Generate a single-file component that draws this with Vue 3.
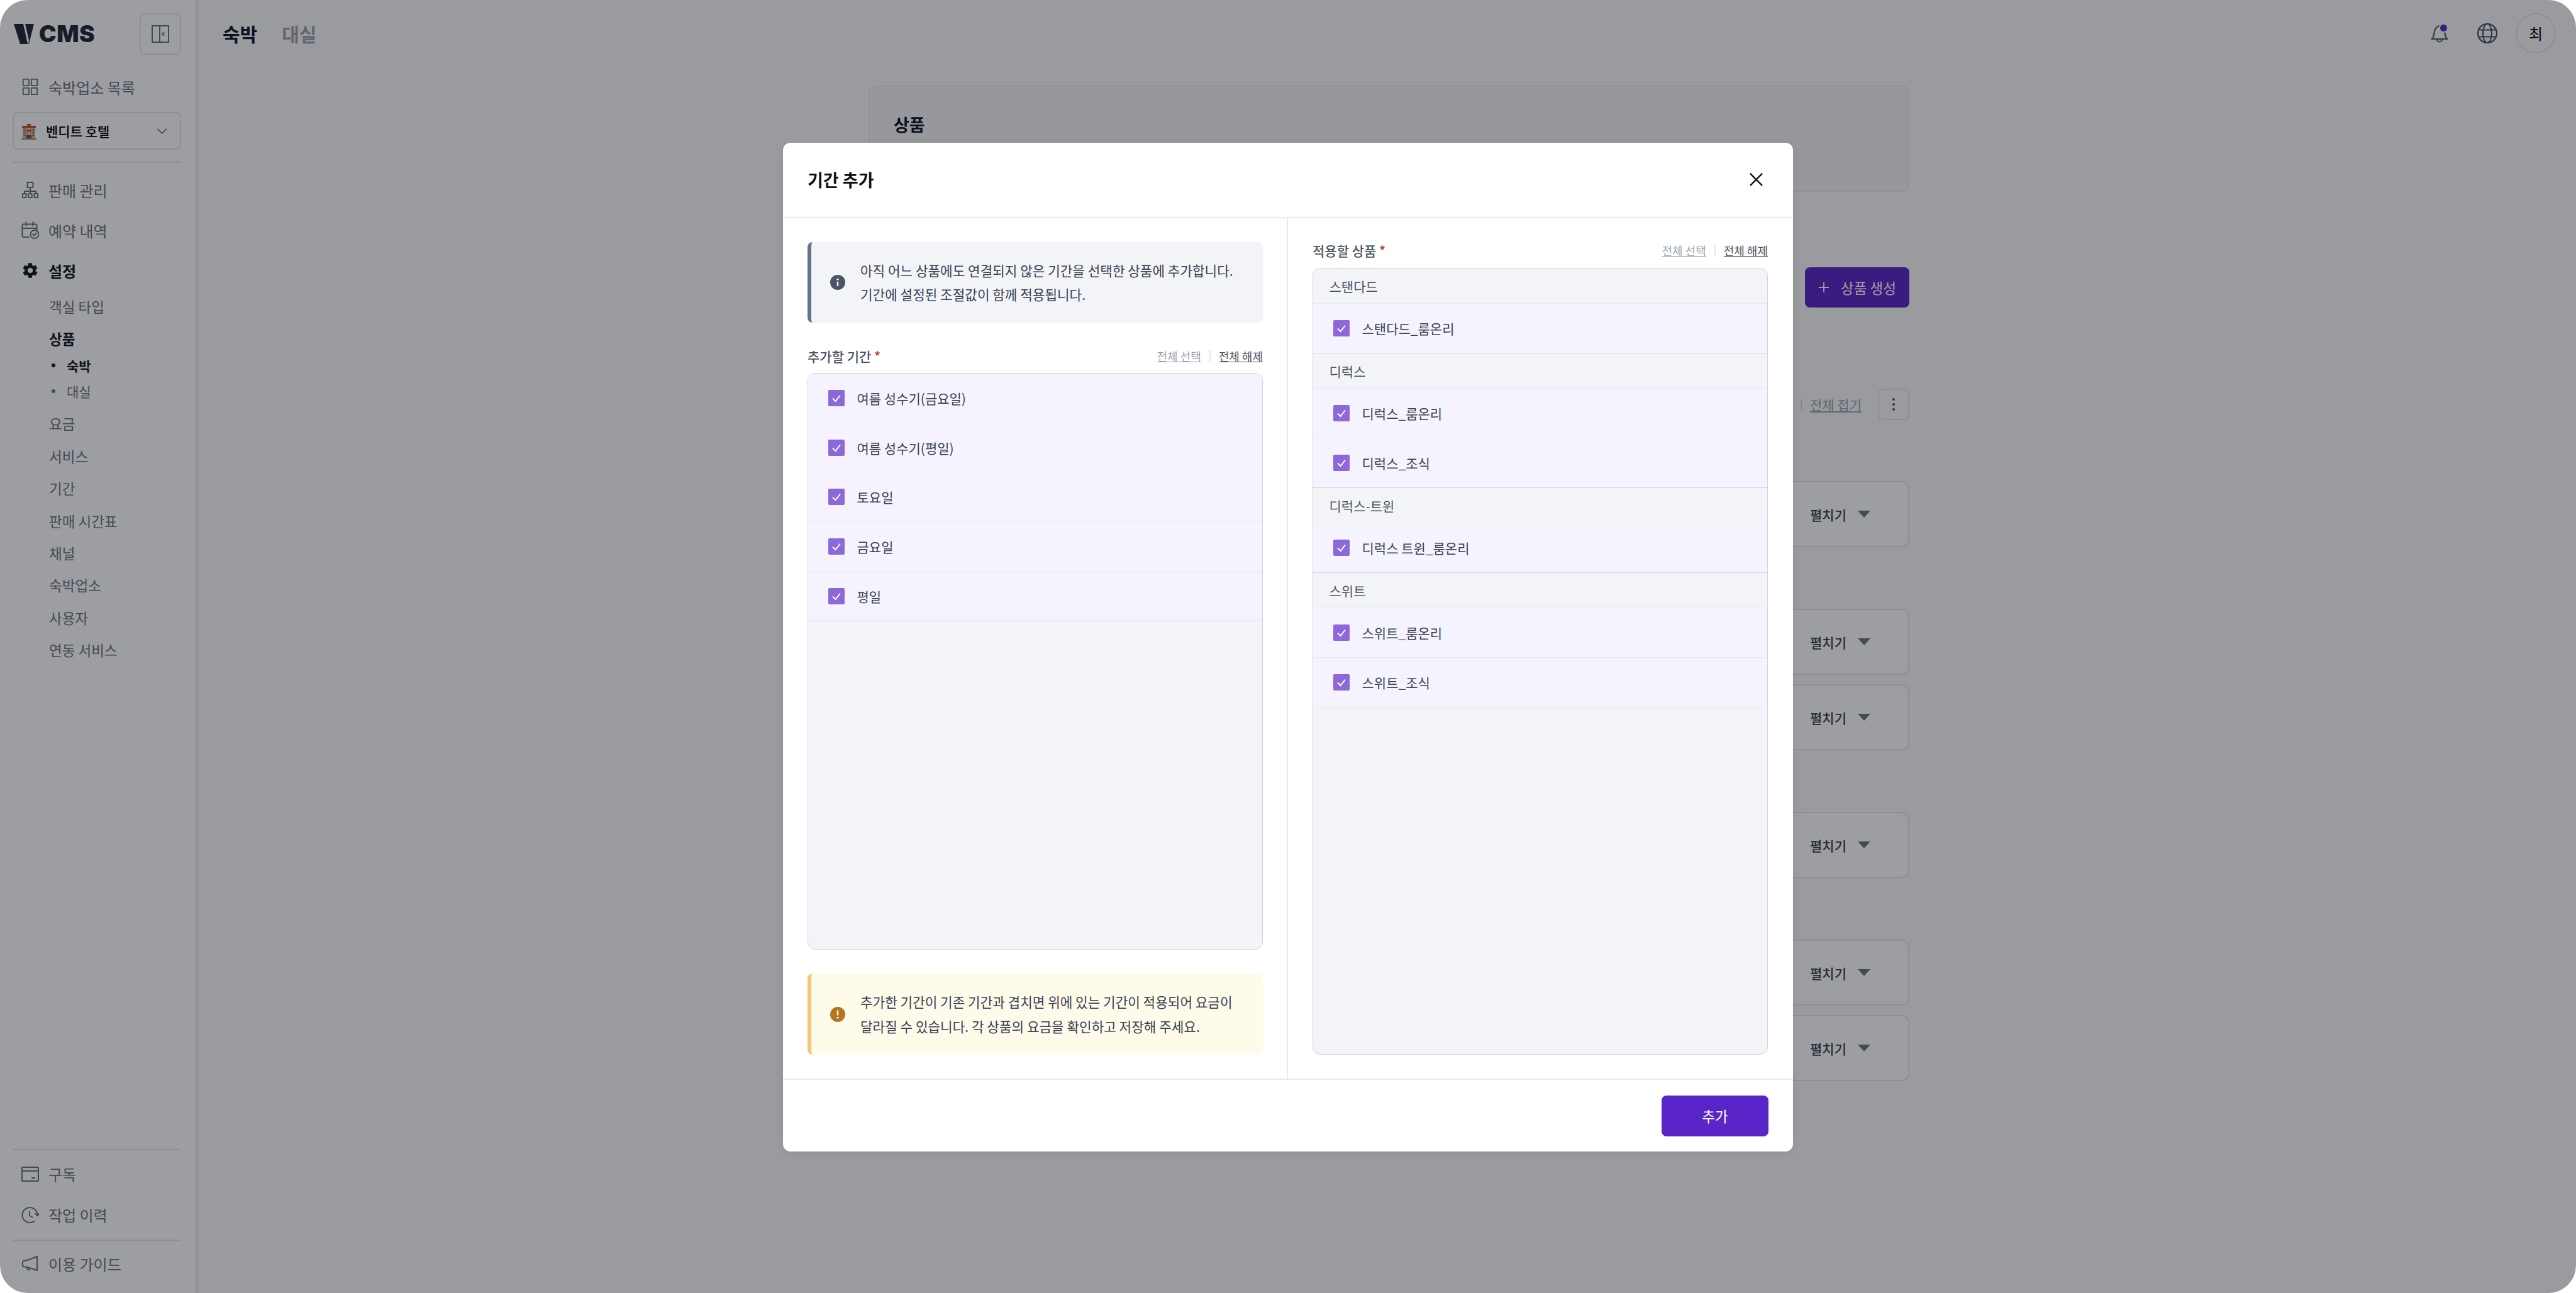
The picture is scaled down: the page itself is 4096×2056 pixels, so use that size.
<script setup>
const topNav = [
  { label: '판매 관리', icon: 'org' },
  { label: '예약 내역', icon: 'calendar' }
]
const subNavAfter = ['요금', '서비스', '기간', '판매 시간표', '채널', '숙박업소', '사용자', '연동 서비스']

const iconPaths = {
  grid: ['M2 2h10v11H2z', 'M16 2h10v11H16z', 'M2 17h10v11H2z', 'M16 17h10v11H16z'],
  org: [
    'M9.5 2h9v8h-9z',
    'M14 10v6', 'M5 20v-4h18v4', 'M14 16v4',
    'M2 20h5.5v6H2z', 'M11.2 20h5.5v6h-5.5z', 'M20.5 20H26v6h-5.5z'
  ],
  calendar: [
    'M12 25H3a1.500 1.500 0 0 1-1.500-1.500V6A1.500 1.500 0 0 1 3 4.500h20A1.500 1.500 0 0 1 24.500 6v8',
    'M1.500 11h23', 'M7.500 1v6', 'M18.500 1v6',
    'M21 14a6.500 6.500 0 1 0 0 13 6.500 6.500 0 0 0 0-13z', 'M18.200 20.500l2 2 3.300-3.800'
  ],
  card: ['M2 3h24a1 1 0 0 1 1 1v20a1 1 0 0 1-1 1H2a1 1 0 0 1-1-1V4a1 1 0 0 1 1-1z', 'M1 9h26', 'M16 20h6'],
  history: [
    'M25.500 14A12 12 0 1 0 21 23.500',
    'M13 8v7l4.500 2.500',
    'M22.500 12l3 3 2.500-3'
  ],
  guide: [
    'M25 3v22L8 19.500H5a3 3 0 0 1-3-3v-4a3 3 0 0 1 3-3h3z',
    'M8 19.500l1.500 3.500a2.500 2.500 0 0 0 4.500-1'
  ]
}

const infoLines = ['아직 어느 상품에도 연결되지 않은 기간을 선택한 상품에 추가합니다.', '기간에 설정된 조절값이 함께 적용됩니다.']
const warnLines = ['추가한 기간이 기존 기간과 겹치면 위에 있는 기간이 적용되어 요금이', '달라질 수 있습니다. 각 상품의 요금을 확인하고 저장해 주세요.']

const periods = ['여름 성수기(금요일)', '여름 성수기(평일)', '토요일', '금요일', '평일']
const productGroups = [
  { name: '스탠다드', items: ['스탠다드_룸온리'] },
  { name: '디럭스', items: ['디럭스_룸온리', '디럭스_조식'] },
  { name: '디럭스-트윈', items: ['디럭스 트윈_룸온리'] },
  { name: '스위트', items: ['스위트_룸온리', '스위트_조식'] }
]
const cardGroups = [1, 2, 1, 2]
</script>

<template>
  <div class="frame">
    <aside class="sidebar">
      <div class="side-head">
        <div class="logo">
          <svg class="logo-mark" viewBox="0 0 34 32" aria-hidden="true">
            <path d="M0 0h15l7 32H10z" fill="#1f2937" />
            <path d="M18 0h14L24 32h-1l1-6z" fill="#1f2937" />
          </svg>
          <span class="logo-text">CMS</span>
        </div>
        <button class="collapse-btn">
          <svg viewBox="0 0 28 28" class="collapse-icon" aria-hidden="true">
            <path d="M1 1h26v26H1z M13 1v26" fill="none" stroke="#6b7280" stroke-width="2" />
            <path d="M20 11l-3 3 3 3" fill="none" stroke="#6b7280" stroke-width="2" />
          </svg>
        </button>
      </div>

      <div class="nav-item list-link">
        <svg viewBox="0 0 28 30" class="nav-icon" aria-hidden="true">
          <path v-for="(d, i) in iconPaths.grid" :key="i" :d="d" fill="none" stroke="#6b7280" stroke-width="2" stroke-linejoin="round" />
        </svg>
        <span>숙박업소 목록</span>
      </div>

      <div class="hotel-select">
        <svg viewBox="0 0 24 28" class="hotel-icon" aria-hidden="true">
          <path d="M9 3h6v3H9z" fill="#b8683f" />
          <path d="M1 6h22v4H1z" fill="#c25a2c" />
          <path d="M2 10h20v18H2z" fill="#d4b487" />
          <path d="M8 10h8v8H8z" fill="#e8dcc4" />
          <path d="M9.500 11v6M14.500 11v6M9.500 14h5" stroke="#d3402b" stroke-width="1.800" fill="none" />
          <path d="M3.500 12h3v2h-3zM17.500 12h3v2h-3zM3.500 16h3v2h-3zM17.500 16h3v2h-3zM3.500 20h3v2h-3zM17.500 20h3v2h-3z" fill="#6b7280" />
          <path d="M8 21h8v7H8z" fill="#4b5563" />
          <path d="M0 26h24v2H0z" fill="#a08a6c" />
        </svg>
        <span class="hotel-name">벤디트 호텔</span>
        <svg viewBox="0 0 18 10" class="chevron" aria-hidden="true">
          <path d="M1 1l8 8 8-8" fill="none" stroke="#6b7280" stroke-width="1.800" />
        </svg>
      </div>

      <div class="side-line first-line"></div>

      <nav class="nav-top">
        <div v-for="item in topNav" :key="item.label" class="nav-item">
          <svg viewBox="0 0 28 28" class="nav-icon" aria-hidden="true">
            <path v-for="(d, i) in iconPaths[item.icon]" :key="i" :d="d" fill="none" stroke="#6b7280" stroke-width="2" stroke-linejoin="round" stroke-linecap="round" />
          </svg>
          <span>{{ item.label }}</span>
        </div>
        <div class="nav-item active">
          <svg viewBox="0 0 24 24" class="nav-icon" aria-hidden="true">
            <path fill="#111827" d="M12 15.500A3.500 3.500 0 0 1 8.500 12 3.500 3.500 0 0 1 12 8.500a3.500 3.500 0 0 1 3.500 3.500 3.500 3.500 0 0 1-3.500 3.500m7.430-2.530c.04-.32.07-.64.07-.97s-.03-.66-.07-1l2.110-1.630c.19-.15.24-.42.12-.64l-2-3.460c-.12-.22-.39-.31-.61-.22l-2.490 1c-.52-.39-1.060-.73-1.690-.98l-.37-2.650A.506.506 0 0 0 14 2h-4c-.25 0-.46.18-.5.42l-.37 2.650c-.63.25-1.170.59-1.690.98l-2.490-1c-.22-.09-.49 0-.61.22l-2 3.460c-.13.22-.07.49.12.64L4.570 11c-.04.34-.07.67-.07 1s.03.65.07.97l-2.110 1.660c-.19.15-.25.42-.12.64l2 3.460c.12.22.39.3.61.22l2.490-1.010c.52.4 1.060.74 1.690.99l.37 2.650c.04.24.25.42.5.42h4c.25 0 .46-.18.5-.42l.37-2.650c.63-.26 1.170-.59 1.690-.99l2.490 1.010c.22.08.49 0 .61-.22l2-3.460c.12-.22.07-.49-.12-.64z" />
          </svg>
          <span>설정</span>
        </div>
      </nav>

      <div class="sub-nav">
        <div class="sub-item">객실 타입</div>
        <div class="sub-item on">상품</div>
        <div class="third-nav">
          <div class="third-item on"><i class="dot"></i>숙박</div>
          <div class="third-item"><i class="dot"></i>대실</div>
        </div>
        <div v-for="name in subNavAfter" :key="name" class="sub-item">{{ name }}</div>
      </div>

      <div class="side-bottom">
        <div class="side-line"></div>
        <div class="bottom-group">
          <div class="nav-item">
            <svg viewBox="0 0 28 28" class="nav-icon" aria-hidden="true">
              <path v-for="(d, i) in iconPaths.card" :key="i" :d="d" fill="none" stroke="#6b7280" stroke-width="2" />
            </svg>
            <span>구독</span>
          </div>
          <div class="nav-item">
            <svg viewBox="0 0 28 28" class="nav-icon" aria-hidden="true">
              <path v-for="(d, i) in iconPaths.history" :key="i" :d="d" fill="none" stroke="#6b7280" stroke-width="2" stroke-linecap="round" stroke-linejoin="round" />
            </svg>
            <span>작업 이력</span>
          </div>
        </div>
        <div class="side-line"></div>
        <div class="nav-item guide-item">
          <svg viewBox="0 0 28 28" class="nav-icon" aria-hidden="true">
            <path v-for="(d, i) in iconPaths.guide" :key="i" :d="d" fill="none" stroke="#6b7280" stroke-width="2" stroke-linejoin="round" />
          </svg>
          <span>이용 가이드</span>
        </div>
      </div>
    </aside>

    <div class="main">
      <header class="topbar">
        <div class="tabs">
          <span class="tab on">숙박</span>
          <span class="tab">대실</span>
        </div>
        <div class="top-actions">
          <span class="bell">
            <svg viewBox="0 0 28 32" class="bell-icon" aria-hidden="true">
              <path d="M1.500 25c3-2 3.500-5 4-10 .6-6 3.500-10 9-11 5 1 7.500 5 8 11 .4 5 1.500 8 4 10z M10 25.500a4 4 0 0 0 8 0" fill="none" stroke="#4b5563" stroke-width="2.200" stroke-linejoin="round" />
            </svg>
            <i class="bell-dot"></i>
          </span>
          <svg viewBox="0 0 32 32" class="globe" aria-hidden="true">
            <circle cx="16" cy="16" r="15" fill="none" stroke="#4b5563" stroke-width="2.200" />
            <ellipse cx="16" cy="16" rx="7" ry="15" fill="none" stroke="#4b5563" stroke-width="2.200" />
            <path d="M2.500 10.500h27M2.500 21.500h27" fill="none" stroke="#4b5563" stroke-width="2.200" />
          </svg>
          <span class="avatar">최</span>
        </div>
      </header>

      <div class="content">
        <section class="title-card"><h2>상품</h2></section>
        <div class="create-row">
          <button class="create-btn">
            <svg viewBox="0 0 20 20" class="plus" aria-hidden="true">
              <path d="M10 1v18M1 10h18" fill="none" stroke="#fff" stroke-width="2" />
            </svg>
            상품 생성
          </button>
        </div>
        <div class="tool-row">
          <i class="tool-sep"></i>
          <a class="fold-link">전체 접기</a>
          <button class="kebab">
            <i></i><i></i><i></i>
          </button>
        </div>
        <div class="card-groups">
          <div v-for="(count, g) in cardGroups" :key="g" class="card-group">
            <div v-for="n in count" :key="n" class="product-card">
              <span>펼치기</span>
              <i class="caret"></i>
            </div>
          </div>
        </div>
      </div>
    </div>

    <div class="overlay">
      <div class="modal">
        <header class="modal-head">
          <h1>기간 추가</h1>
          <svg viewBox="0 0 24 24" class="close" aria-hidden="true">
            <path d="M2 2l20 20M22 2L2 22" fill="none" stroke="#111" stroke-width="2.400" />
          </svg>
        </header>

        <div class="modal-body">
          <div class="col left-col">
            <div class="notice info">
              <svg viewBox="0 0 24 24" class="notice-icon" aria-hidden="true">
                <circle cx="12" cy="12" r="12" fill="#4b5563" />
                <circle cx="12" cy="7.200" r="1.500" fill="#fff" />
                <path d="M12 10.800v7" stroke="#fff" stroke-width="2.400" fill="none" />
              </svg>
              <div class="notice-text">
                <p v-for="line in infoLines" :key="line">{{ line }}</p>
              </div>
            </div>

            <div class="field-head period-head">
              <span class="field-label">추가할 기간 <em>*</em></span>
              <span class="links">
                <a class="muted">전체 선택</a>
                <i></i>
                <a>전체 해제</a>
              </span>
            </div>
            <div class="pick-list">
              <label v-for="name in periods" :key="name" class="pick-row">
                <svg viewBox="0 0 26 26" class="check" aria-hidden="true">
                  <rect width="26" height="26" rx="2" fill="#8e67d9" />
                  <path d="M7 13.500l4.500 4.500L19 8.500" fill="none" stroke="#fff" stroke-width="2" />
                </svg>
                <span>{{ name }}</span>
              </label>
            </div>

            <div class="notice warn">
              <svg viewBox="0 0 24 24" class="notice-icon" aria-hidden="true">
                <circle cx="12" cy="12" r="12" fill="#b7741f" />
                <path d="M12 5.500v8" stroke="#fff" stroke-width="2.400" fill="none" />
                <circle cx="12" cy="17.200" r="1.500" fill="#fff" />
              </svg>
              <div class="notice-text">
                <p v-for="line in warnLines" :key="line">{{ line }}</p>
              </div>
            </div>
          </div>

          <div class="col right-col">
            <div class="field-head">
              <span class="field-label">적용할 상품 <em>*</em></span>
              <span class="links">
                <a class="muted">전체 선택</a>
                <i></i>
                <a>전체 해제</a>
              </span>
            </div>
            <div class="pick-list">
              <div v-for="group in productGroups" :key="group.name" class="pick-group">
                <div class="group-name">{{ group.name }}</div>
                <label v-for="item in group.items" :key="item" class="pick-row">
                  <svg viewBox="0 0 26 26" class="check" aria-hidden="true">
                    <rect width="26" height="26" rx="2" fill="#8e67d9" />
                    <path d="M7 13.500l4.500 4.500L19 8.500" fill="none" stroke="#fff" stroke-width="2" />
                  </svg>
                  <span>{{ item }}</span>
                </label>
              </div>
            </div>
          </div>
        </div>

        <footer class="modal-foot">
          <button class="add-btn">추가</button>
        </footer>
      </div>
    </div>
  </div>
</template>

<style scoped>
.frame {
  width: 4096px;
  height: 2056px;
  border-radius: 44px;
  overflow: hidden;
  position: relative;
  display: flex;
  background: #fff;
  font-family: "Noto Sans CJK KR", "Noto Sans", sans-serif;
  color: #111827;
}

/* sidebar */
.sidebar {
  width: 314px;
  flex-shrink: 0;
  box-sizing: border-box;
  border-right: 2px solid #e5e7eb;
  padding: 0 24px 0 20px;
  display: flex;
  flex-direction: column;
  background: #fff;
}

.side-head {
  display: flex;
  justify-content: space-between;
  align-items: center;
  padding-top: 21px;
}

.logo {
  display: flex;
  align-items: center;
  gap: 6px;
  padding-left: 2px;
}

.logo-mark {
  width: 34px;
  height: 32px;
}

.logo-text {
  font-family: Inter, "Liberation Sans", sans-serif;
  font-weight: 900;
  font-size: 37px;
  letter-spacing: 0.5px;
  line-height: 32px;
  color: #1f2937;
}

.collapse-btn {
  width: 66px;
  height: 66px;
  padding: 0;
  background: none;
  border: 2px solid #e5e7eb;
  border-radius: 8px;
  display: flex;
  align-items: center;
  justify-content: center;
}

.collapse-icon {
  width: 28px;
  height: 28px;
}

.nav-item {
  display: flex;
  align-items: center;
  gap: 15px;
  height: 64px;
  padding-left: 14px;
  font-size: 24px;
  color: #6b7280;
}

.nav-item.active {
  color: #111827;
  font-weight: 600;
}

.list-link {
  height: 52px;
  margin-top: 25px;
}

.nav-icon {
  width: 28px;
  height: 28px;
  flex-shrink: 0;
}

.hotel-select {
  height: 60px;
  margin-top: 14px;
  box-sizing: border-box;
  border: 2px solid #e5e7eb;
  border-radius: 8px;
  display: flex;
  align-items: center;
  padding: 0 20px 0 12px;
}

.hotel-icon {
  width: 24px;
  height: 28px;
}

.hotel-name {
  margin-left: 15px;
  font-size: 21px;
  font-weight: 500;
  color: #000;
}

.chevron {
  width: 17px;
  height: 9px;
  margin-left: auto;
}

.side-line {
  height: 2px;
  background: #e5e7eb;
}

.first-line {
  margin-top: 19px;
}

.nav-top {
  margin-top: 11px;
}

.sub-nav {
  margin-top: -1px;
}

.sub-item {
  height: 51.4px;
  padding-left: 58px;
  display: flex;
  align-items: center;
  font-size: 22.5px;
  color: #6b7280;
}

.sub-item.on {
  font-weight: 600;
  color: #111827;
}

.third-nav {
  margin: -3px 0 5px;
}

.third-item {
  height: 41px;
  padding-left: 62px;
  display: flex;
  align-items: center;
  gap: 18px;
  font-size: 21px;
  color: #6b7280;
}

.third-item.on {
  font-weight: 600;
  color: #111827;
}

.dot {
  width: 6px;
  height: 6px;
  border-radius: 50%;
  background: currentColor;
}

.side-bottom {
  margin-top: auto;
  padding-bottom: 15px;
}

.bottom-group {
  padding: 5px 0 7px;
}

.bottom-group .nav-item {
  height: 65px;
}

.guide-item {
  margin-top: 4px;
}

/* main */
.main {
  flex: 1;
  min-width: 0;
  background: #fafafb;
}

.topbar {
  height: 105px;
  display: flex;
  align-items: center;
  justify-content: space-between;
  padding: 0 32px 0 40px;
}

.tabs {
  display: flex;
  gap: 39px;
}

.tab {
  font-size: 30px;
  font-weight: 600;
  color: #9ca3af;
}

.tab.on {
  color: #111827;
}

.top-actions {
  display: flex;
  align-items: center;
}

.bell {
  position: relative;
  width: 28px;
  height: 32px;
  margin-right: 46px;
}

.bell-icon {
  width: 28px;
  height: 32px;
  display: block;
}

.bell-dot {
  position: absolute;
  top: 2px;
  right: 2px;
  width: 11px;
  height: 11px;
  border-radius: 50%;
  background: #5a25c8;
  box-shadow: 0 0 0 2px #fafafb;
}

.globe {
  width: 32px;
  height: 32px;
  margin-right: 29px;
}

.avatar {
  width: 64px;
  height: 64px;
  box-sizing: border-box;
  border: 2px solid #e5e7eb;
  border-radius: 50%;
  display: flex;
  align-items: center;
  justify-content: center;
  font-size: 24px;
  color: #000;
}

.content {
  width: 1655px;
  margin-left: 1067px;
  padding-top: 31px;
}

.title-card {
  height: 169px;
  box-sizing: border-box;
  border: 2px solid #ebebef;
  border-radius: 12px;
  background: #f5f5f7;
  padding: 40px 38px;
}

.title-card h2 {
  margin: 0;
  font-size: 27px;
  line-height: 40px;
  font-weight: 700;
}

.create-row {
  display: flex;
  justify-content: flex-end;
  margin-top: 120px;
}

.create-btn {
  width: 166px;
  height: 64px;
  padding: 0;
  border: none;
  border-radius: 8px;
  background: #5a25c8;
  color: #fff;
  font: inherit;
  font-size: 22.500px;
  display: flex;
  align-items: center;
  justify-content: center;
  gap: 18px;
}

.plus {
  width: 18px;
  height: 18px;
}

.tool-row {
  display: flex;
  justify-content: flex-end;
  align-items: center;
  margin-top: 129px;
}

.tool-sep {
  width: 2px;
  height: 16px;
  background: #d1d5db;
  margin-right: 13px;
}

.fold-link {
  font-size: 21px;
  color: #9ca3af;
  text-decoration: underline;
  margin-right: 26px;
}

.kebab {
  width: 50px;
  height: 50px;
  padding: 0;
  background: none;
  border: 2px solid #e5e7eb;
  border-radius: 8px;
  display: flex;
  flex-direction: column;
  align-items: center;
  justify-content: center;
  gap: 4px;
}

.kebab i {
  width: 4px;
  height: 4px;
  border-radius: 50%;
  background: #4b5563;
}

.card-groups {
  display: flex;
  flex-direction: column;
  gap: 98px;
  margin-top: 97px;
}

.card-group {
  display: flex;
  flex-direction: column;
  gap: 15px;
}

.product-card {
  height: 105px;
  box-sizing: border-box;
  border: 2px solid #e5e7eb;
  border-radius: 12px;
  background: #fff;
  display: flex;
  align-items: center;
  justify-content: flex-end;
  gap: 18px;
  padding-right: 60px;
  font-size: 21px;
  font-weight: 500;
  color: #374151;
}

.caret {
  width: 0;
  height: 0;
  border-left: 10px solid transparent;
  border-right: 10px solid transparent;
  border-top: 11px solid #6b7280;
}

/* modal */
.overlay {
  position: absolute;
  inset: 0;
  padding-top: 2px;
  box-sizing: border-box;
  background: rgba(10, 12, 20, 0.4);
  display: flex;
  align-items: center;
  justify-content: center;
}

.modal {
  width: 1606px;
  height: 1604px;
  background: #fff;
  border-radius: 12px;
  box-shadow: 0 4px 16px rgba(0, 0, 0, 0.06);
  display: flex;
  flex-direction: column;
  overflow: hidden;
}

.modal-head {
  height: 120px;
  flex-shrink: 0;
  box-sizing: border-box;
  border-bottom: 2px solid #e9eaf0;
  display: flex;
  align-items: center;
  justify-content: space-between;
  padding: 0 47px 2px 39px;
}

.modal-head h1 {
  margin: 0;
  font-size: 27px;
  font-weight: 700;
  color: #111;
}

.close {
  width: 23px;
  height: 23px;
}

.modal-body {
  flex: 1;
  min-height: 0;
  display: grid;
  grid-template-columns: 803px 1fr;
}

.col {
  display: flex;
  flex-direction: column;
  min-height: 0;
  padding: 38px 40px 38px 39px;
}

.left-col {
  border-right: 2px solid #e9eaf0;
  padding-right: 38px;
}

.notice {
  height: 128px;
  flex-shrink: 0;
  box-sizing: border-box;
  border-radius: 8px;
  border-left: 6px solid;
  display: flex;
  align-items: center;
  gap: 24px;
  padding-left: 30px;
}

.notice.info {
  background: #f3f4f8;
  border-left-color: #64748b;
}

.notice.warn {
  height: 129px;
  margin-top: 38px;
  background: #fefbeb;
  border-left-color: #f5c76e;
}

.notice-icon {
  width: 24px;
  height: 24px;
  flex-shrink: 0;
}

.notice-text p {
  margin: 0;
  font-size: 21.300px;
  line-height: 38.300px;
  color: #374151;
}

.field-head {
  height: 26px;
  flex-shrink: 0;
  display: flex;
  align-items: center;
  justify-content: space-between;
  margin-bottom: 15px;
}

.period-head {
  margin-top: 40px;
  margin-bottom: 14px;
}

.field-label {
  font-size: 21px;
  font-weight: 500;
  color: #4b5563;
}

.field-label em {
  font-style: normal;
  color: #c0392b;
}

.links {
  display: flex;
  align-items: center;
  font-size: 18px;
  color: #4b5563;
}

.links a {
  text-decoration: underline;
}

.links .muted {
  color: #9ca3af;
}

.links i {
  width: 2px;
  height: 18px;
  background: #e5e7eb;
  margin: 0 13px;
}

.pick-list {
  flex: 1;
  min-height: 0;
  box-sizing: border-box;
  border: 1.500px solid #d1d5db;
  border-radius: 12px;
  background: #f3f4f8;
  overflow: hidden;
}

.pick-row {
  height: 78.700px;
  box-sizing: border-box;
  background: #f5f3fd;
  border-bottom: 1.500px solid #e9eaf0;
  display: flex;
  align-items: center;
  gap: 20px;
  padding-left: 31.500px;
  font-size: 21px;
  color: #374151;
}

.pick-group:not(:last-child) .pick-row:last-child {
  border-bottom-color: #d1d5db;
}

.check {
  width: 26px;
  height: 26px;
  flex-shrink: 0;
}

.group-name {
  height: 56.400px;
  box-sizing: border-box;
  border-bottom: 1.500px solid #e9eaf0;
  background: #f3f4f8;
  display: flex;
  align-items: center;
  padding-left: 25.500px;
  font-size: 21px;
  color: #4b5563;
}

.modal-foot {
  height: 116px;
  flex-shrink: 0;
  box-sizing: border-box;
  border-top: 2px solid #e9eaf0;
  display: flex;
  align-items: center;
  justify-content: flex-end;
  padding-right: 39px;
}

.add-btn {
  width: 170px;
  height: 65px;
  padding: 0;
  border: none;
  border-radius: 8px;
  background: #5a25c8;
  color: #fff;
  font: inherit;
  font-size: 22.500px;
}
</style>

<style>
html, body {
  margin: 0;
  background: #fff;
}
</style>
